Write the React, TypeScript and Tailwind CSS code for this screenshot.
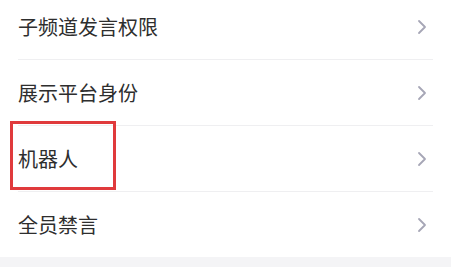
import { ChevronRight } from 'lucide-react';

const items = ['子频道发言权限', '展示平台身份', '机器人', '全员禁言'];

export default function App() {
  return (
    <div
      className="relative h-[267px] w-[451px] overflow-hidden bg-white"
      style={{ fontFamily: '"Noto Sans CJK SC", "Noto Sans", sans-serif' }}
    >
      <div className="-mt-[6px] flex flex-col">
        {items.map((label, i) => (
          <div key={label} className="flex flex-col">
            <div className="flex h-[65px] items-center justify-between pl-[18px] pr-[17px]">
              <span className="text-[20px] leading-none text-[#2e2e2e]">{label}</span>
              <ChevronRight className="h-[24px] w-[24px] text-[#a6a6b6]" strokeWidth={1.8} />
            </div>
            {i < items.length - 1 && <div className="mx-[18px] h-px bg-[#efeff1]" />}
          </div>
        ))}
      </div>
      <div className="h-[12px] bg-[#f4f4f6]" />

      {/* annotation box */}
      <div className="absolute left-[10px] top-[121px] h-[69px] w-[106px] border-[3px] border-[#e03a3c]" />
    </div>
  );
}
